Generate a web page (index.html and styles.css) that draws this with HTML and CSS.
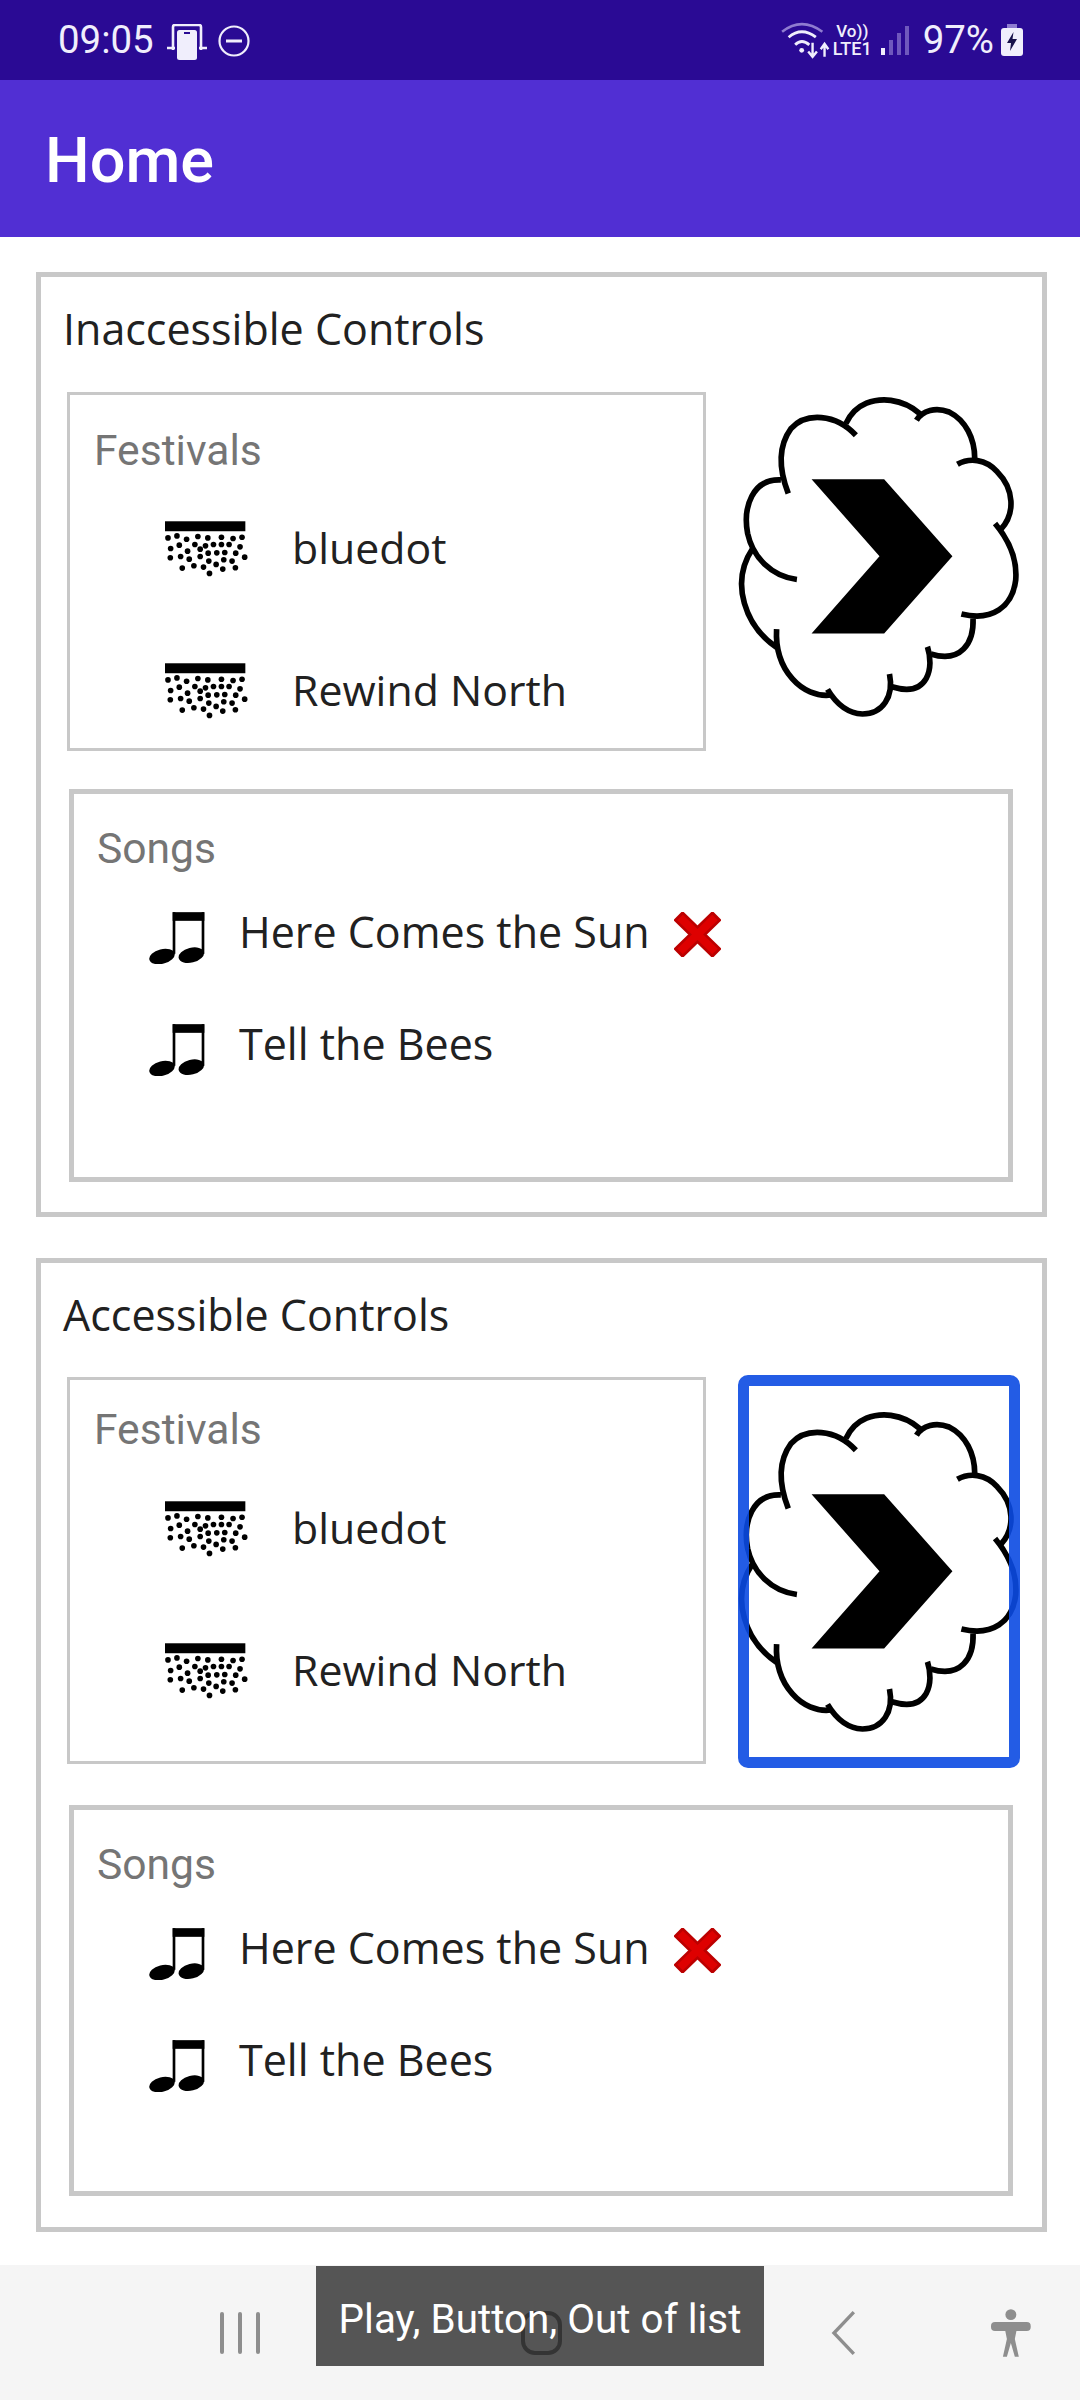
FILE: index.html
```html
<!DOCTYPE html>
<html lang="en">
<head>
    <meta charset="UTF-8">
    <meta name="viewport" content="width=device-width, initial-scale=1.0">
    <title>Home</title>
    <link rel="stylesheet" href="styles.css">
</head>
<body>
    <svg class="defs" width="0" height="0" aria-hidden="true">
        <symbol id="stage" viewBox="75 63 250 170">
            <rect x="75" y="63" width="242" height="30" fill="#000"/>
            <g fill="#000">
                <circle cx="84" cy="113" r="8.5"/><circle cx="111" cy="107" r="8.5"/><circle cx="140" cy="117" r="8.5"/><circle cx="174" cy="109" r="8.5"/><circle cx="204" cy="113" r="8.5"/><circle cx="245" cy="111" r="8.5"/><circle cx="280" cy="115" r="8.5"/><circle cx="307" cy="111" r="8.5"/>
                <circle cx="92" cy="145" r="8.5"/><circle cx="118" cy="135" r="8.5"/><circle cx="143" cy="153" r="8.5"/><circle cx="165" cy="133" r="8.5"/><circle cx="181" cy="147" r="8.5"/><circle cx="197" cy="137" r="8.5"/><circle cx="221" cy="133" r="8.5"/><circle cx="245" cy="133" r="8.5"/><circle cx="268" cy="133" r="8.5"/><circle cx="301" cy="140" r="8.5"/>
                <circle cx="91" cy="173" r="8.5"/><circle cx="122" cy="169" r="8.5"/><circle cx="148" cy="177" r="8.5"/><circle cx="181" cy="169" r="8.5"/><circle cx="205" cy="159" r="8.5"/><circle cx="231" cy="158" r="8.5"/><circle cx="255" cy="157" r="8.5"/><circle cx="288" cy="159" r="8.5"/><circle cx="315" cy="171" r="8.5"/>
                <circle cx="127" cy="204" r="8.5"/><circle cx="162" cy="197" r="8.5"/><circle cx="191" cy="201" r="8.5"/><circle cx="207" cy="183" r="8.5"/><circle cx="229" cy="193" r="8.5"/><circle cx="252" cy="179" r="8.5"/><circle cx="277" cy="183" r="8.5"/><circle cx="287" cy="203" r="8.5"/><circle cx="249" cy="207" r="8.5"/><circle cx="209" cy="220" r="8.5"/>
            </g>
        </symbol>
        <symbol id="note" viewBox="57 95 168 155">
            <rect x="128" y="95" width="95" height="26" fill="#000"/>
            <rect x="128" y="95" width="8" height="125" fill="#000"/>
            <rect x="215" y="95" width="8" height="125" fill="#000"/>
            <ellipse cx="96" cy="228" rx="39" ry="22" transform="rotate(-14 96 228)" fill="#000"/>
            <ellipse cx="184" cy="224" rx="39" ry="22" transform="rotate(-14 184 224)" fill="#000"/>
        </symbol>
        <symbol id="cross" viewBox="0 0 47 45">
            <path d="M4 3.5 L43 41.5 M43 3.5 L4 41.5" stroke="#bc0000" stroke-width="13"/>
            <path d="M6 5.5 L41 39.5 M41 5.5 L6 39.5" stroke="#de0000" stroke-width="8"/>
        </symbol>
        <symbol id="cloud" viewBox="105 68 860 982">
            <g fill="none" stroke="#000" stroke-width="17">
                <path d="M293 628 C215 618 160 560 145 490 C130 410 160 325 245 329"/>
                <path d="M267 370 C240 300 235 230 275 175 C320 125 410 130 470 195"/>
                <path d="M440 160 C470 95 530 85 575 90 C610 95 640 110 662 130"/>
                <path d="M652 150 C670 120 710 110 750 125 C800 150 827 205 827 265"/>
                <path d="M775 282 C810 262 860 265 895 305 C945 355 950 430 905 478"/>
                <path d="M888 460 C930 510 955 570 950 630 C940 710 880 755 787 732"/>
                <path d="M822 745 C825 820 785 880 695 852"/>
                <path d="M685 830 C705 890 690 985 578 950"/>
                <path d="M571 912 C585 980 550 1032 490 1032 C445 1030 410 1000 385 958"/>
                <path d="M395 975 C310 985 225 900 232 777"/>
                <path d="M232 832 C140 770 90 640 160 535"/>
            </g>
            <polygon points="337,327 555,327 760,558 555,790 337,790 541,558" fill="#000"/>
        </symbol>
    </svg>

    <header class="status-bar">
        <div class="status-left">
            <span class="status-time">09:05</span>
            <svg class="icon-cast" viewBox="0 0 40 36">
                <path d="M6 26 V3 Q6 1 8 1 H32 Q34 1 34 3 V26" fill="none" stroke="#f0eefc" stroke-width="2.6"/>
                <path d="M0 24 H40" stroke="#f0eefc" stroke-width="2.6"/>
                <rect x="8" y="5" width="24" height="31" fill="#2a0a94"/>
                <rect x="10" y="6" width="20" height="30" rx="2.5" fill="#f0eefc"/>
                <rect x="17" y="8" width="6" height="2" fill="#2a0a94"/>
            </svg>
            <svg class="icon-dnd" viewBox="0 0 32 32">
                <circle cx="16" cy="16" r="14.5" fill="none" stroke="#f0eefc" stroke-width="2.2"/>
                <rect x="8" y="14.5" width="16" height="3" fill="#f0eefc"/>
            </svg>
        </div>
        <div class="status-right">
            <svg class="icon-wifi" viewBox="0 0 45 34">
                <path d="M1 9 Q19 -5 38 9" fill="none" stroke="#8f7cd0" stroke-width="2.4"/>
                <path d="M7 14 Q19 4 32 14" fill="none" stroke="#f0eefc" stroke-width="2.6"/>
                <path d="M13 21 Q19 15 26 21" fill="none" stroke="#f0eefc" stroke-width="2.6"/>
                <circle cx="19" cy="26" r="2.2" fill="#f0eefc"/>
                <path d="M29 19 V31 M25 27 L29 32 L33 27 M40 32 V21 M36.5 25 L40 20 L43.5 25" fill="none" stroke="#f0eefc" stroke-width="2.2"/>
            </svg>
            <div class="network-type">
                <span class="volte">Vo))</span>
                <span class="lte">LTE1</span>
            </div>
            <div class="signal">
                <span class="signal-bar signal-on"></span>
                <span class="signal-bar signal-mid"></span>
                <span class="signal-bar signal-tall"></span>
                <span class="signal-bar signal-full"></span>
            </div>
            <span class="status-battery">97%</span>
            <svg class="icon-battery" viewBox="0 0 22 32">
                <rect x="6" y="0" width="10" height="5" fill="#8f7cd0"/>
                <rect x="0" y="4" width="22" height="28" rx="3" fill="#f0eefc"/>
                <path d="M12.5 8 L6 19 H10 L9 27 L16 15 H11.5 Z" fill="#16104a"/>
            </svg>
        </div>
    </header>

    <div class="app-bar">Home</div>

    <main class="content">
        <section class="card">
            <h2 class="card-title">Inaccessible Controls</h2>
            <div class="top-row">
                <div class="festivals">
                    <div class="list-label">Festivals</div>
                    <div class="festival-row">
                        <svg class="stage-icon"><use href="#stage"/></svg>
                        <span class="row-text">bluedot</span>
                    </div>
                    <div class="festival-row">
                        <svg class="stage-icon"><use href="#stage"/></svg>
                        <span class="row-text">Rewind North</span>
                    </div>
                </div>
                <div class="play-button">
                    <svg class="cloud"><use href="#cloud"/></svg>
                </div>
            </div>
            <div class="songs">
                <div class="list-label">Songs</div>
                <div class="song-row">
                    <svg class="note-icon"><use href="#note"/></svg>
                    <span class="row-text song-text">Here Comes the Sun</span>
                    <svg class="cross-icon"><use href="#cross"/></svg>
                </div>
                <div class="song-row">
                    <svg class="note-icon"><use href="#note"/></svg>
                    <span class="row-text song-text">Tell the Bees</span>
                </div>
            </div>
        </section>

        <section class="card card-accessible">
            <h2 class="card-title">Accessible Controls</h2>
            <div class="top-row">
                <div class="festivals">
                    <div class="list-label">Festivals</div>
                    <div class="festival-row">
                        <svg class="stage-icon"><use href="#stage"/></svg>
                        <span class="row-text">bluedot</span>
                    </div>
                    <div class="festival-row">
                        <svg class="stage-icon"><use href="#stage"/></svg>
                        <span class="row-text">Rewind North</span>
                    </div>
                </div>
                <div class="play-button">
                    <svg class="cloud"><use href="#cloud"/></svg>
                    <div class="focus-ring"></div>
                </div>
            </div>
            <div class="songs">
                <div class="list-label">Songs</div>
                <div class="song-row">
                    <svg class="note-icon"><use href="#note"/></svg>
                    <span class="row-text song-text">Here Comes the Sun</span>
                    <svg class="cross-icon"><use href="#cross"/></svg>
                </div>
                <div class="song-row">
                    <svg class="note-icon"><use href="#note"/></svg>
                    <span class="row-text song-text">Tell the Bees</span>
                </div>
            </div>
        </section>
    </main>

    <footer class="nav-bar">
        <div class="nav-recent">
            <span class="nav-line"></span>
            <span class="nav-line"></span>
            <span class="nav-line"></span>
        </div>
        <div class="nav-home"></div>
        <svg class="nav-back" viewBox="0 0 25 46">
            <path d="M23 2 L3 23 L23 44" fill="none" stroke="#8e8e8e" stroke-width="3.4"/>
        </svg>
        <svg class="nav-person" viewBox="0 0 40 48">
            <circle cx="20" cy="5.5" r="5.5" fill="#8e8e8e"/>
            <rect x="0" y="13" width="40" height="9" rx="4" fill="#8e8e8e"/>
            <path d="M14 20 H26 L24 30 L28 48 H24 L20 34 L16 48 H12 L16 30 Z" fill="#8e8e8e"/>
        </svg>
        <div class="toast">Play, Button, Out of list</div>
    </footer>
</body>
</html>
```

FILE: styles.css
```css
* {
    box-sizing: border-box;
}
html, body {
    margin: 0;
    padding: 0;
}
body {
    width: 1080px;
    height: 2400px;
    overflow: hidden;
    display: flex;
    flex-direction: column;
    background-color: white;
    font-family: "Open Sans", sans-serif;
    color: #212121;
}
.defs {
    display: block;
    flex: none;
}

/* status bar */
.status-bar {
    flex: none;
    height: 80px;
    padding: 0 57px 0 58px;
    display: flex;
    align-items: center;
    justify-content: space-between;
    background-color: #2a0a94;
    color: #f0eefc;
    font-family: Roboto, sans-serif;
}
.status-left, .status-right {
    display: flex;
    align-items: center;
}
.status-time, .status-battery {
    font-size: 38.4px;
    line-height: 44px;
}
.icon-cast {
    width: 40px;
    height: 36px;
    margin: 4px 0 0 13px;
}
.icon-dnd {
    width: 32px;
    height: 32px;
    margin: 2px 0 0 11px;
}
.icon-wifi {
    width: 49px;
    height: 37px;
}
.network-type {
    display: flex;
    flex-direction: column;
    align-items: center;
    margin-left: 3px;
    font-size: 18px;
    font-weight: 500;
    line-height: 17px;
}
.volte {
    font-size: 17px;
}
.signal {
    display: flex;
    align-items: flex-end;
    gap: 4px;
    height: 29px;
    margin-left: 9px;
}
.signal-bar {
    width: 4px;
    background-color: #6f58bd;
}
.signal-on {
    height: 7px;
    background-color: #f0eefc;
}
.signal-mid {
    height: 15px;
}
.signal-tall {
    height: 22px;
}
.signal-full {
    height: 29px;
}
.status-battery {
    margin-left: 14px;
}
.icon-battery {
    width: 22px;
    height: 32px;
    margin-left: 7px;
}

.app-bar {
    flex: none;
    height: 157px;
    padding: 3px 0 0 45px;
    display: flex;
    align-items: center;
    background-color: #512fd3;
    color: white;
    font-family: Roboto, sans-serif;
    font-size: 63px;
    font-weight: 500;
}

/* cards */
.content {
    flex: 1;
    padding: 35px 33px 0 36px;
    display: flex;
    flex-direction: column;
    gap: 41px;
}
.card {
    height: 945px;
    padding: 24px 0 0 18px;
    border: 5px solid #c8c8c8;
}
.card-accessible {
    height: 974px;
}
.card-title {
    margin: 0 0 3px 4px;
    font-size: 43px;
    font-weight: 400;
    line-height: 56px;
}
.card-accessible .card-title {
    margin-bottom: 32px;
}
.top-row {
    display: flex;
    align-items: flex-end;
    justify-content: space-between;
    width: 953px;
    margin-left: 8px;
}
.festivals {
    width: 639px;
    height: 359px;
    margin-bottom: 2px;
    padding: 30px 0 0 24px;
    border: 3px solid #c8c8c8;
    display: flex;
    flex-direction: column;
}
.card-accessible .festivals {
    height: 387px;
    margin-bottom: 4px;
    padding-top: 24px;
}
.list-label {
    font-family: Roboto, sans-serif;
    font-size: 42.6px;
    line-height: 50px;
    color: #757575;
}
.festival-row {
    height: 80px;
    margin-top: 62px;
    padding-left: 71px;
    display: flex;
    align-items: center;
}
.list-label + .festival-row {
    margin-top: 33px;
}
.card-accessible .list-label + .festival-row {
    margin-top: 34px;
}
.stage-icon {
    width: 83px;
    height: 57px;
    margin-top: 3px;
    flex: none;
}
.row-text {
    margin-left: 44px;
    font-size: 42.8px;
    line-height: 56px;
    white-space: nowrap;
}
.play-button {
    position: relative;
    width: 282px;
    height: 393px;
    flex: none;
    display: flex;
    align-items: center;
    justify-content: center;
}
.cloud {
    width: 287px;
    height: 327px;
    margin-left: -4px;
    flex: none;
    overflow: visible;
}
.focus-ring {
    position: absolute;
    top: 0;
    right: 0;
    bottom: 0;
    left: 0;
    border: 11px solid rgba(11, 74, 226, 0.9);
    border-radius: 10px;
}
.songs {
    width: 944px;
    height: 393px;
    margin: 36px 0 0 10px;
    padding: 29px 0 0 23px;
    border: 5px solid #c8c8c8;
}
.card-accessible .songs {
    height: 391px;
    margin-top: 37px;
}
.song-row {
    height: 60px;
    margin-top: 52px;
    padding-left: 52px;
    display: flex;
    align-items: center;
}
.list-label + .song-row {
    margin-top: 35px;
}
.note-icon {
    width: 56px;
    height: 52px;
    flex: none;
}
.song-text {
    margin: 0 0 13px 34px;
    font-size: 43px;
}
.cross-icon {
    width: 47px;
    height: 45px;
    margin: 0 0 7px 24px;
    flex: none;
}

/* navigation */
.nav-bar {
    flex: none;
    position: relative;
    height: 135px;
    padding: 0 49px 0 220px;
    display: flex;
    align-items: center;
    background-color: #f5f5f5;
}
.nav-recent {
    width: 40px;
    height: 42px;
    display: flex;
    justify-content: space-between;
}
.nav-line {
    width: 4px;
    background-color: #8e8e8e;
    border-radius: 2px;
}
.nav-home {
    width: 42px;
    height: 44px;
    margin-left: 261px;
    border: 4px solid #606060;
    border-radius: 14px;
}
.nav-back {
    width: 25px;
    height: 46px;
    margin-left: 269px;
}
.nav-person {
    width: 40px;
    height: 48px;
    margin-left: 135px;
}
.toast {
    position: absolute;
    top: 1px;
    left: 316px;
    width: 448px;
    height: 100px;
    padding-top: 6px;
    display: flex;
    align-items: center;
    justify-content: center;
    background-color: rgba(40, 40, 40, 0.78);
    color: white;
    font-family: Roboto, sans-serif;
    font-size: 40.4px;
    white-space: nowrap;
}
```
